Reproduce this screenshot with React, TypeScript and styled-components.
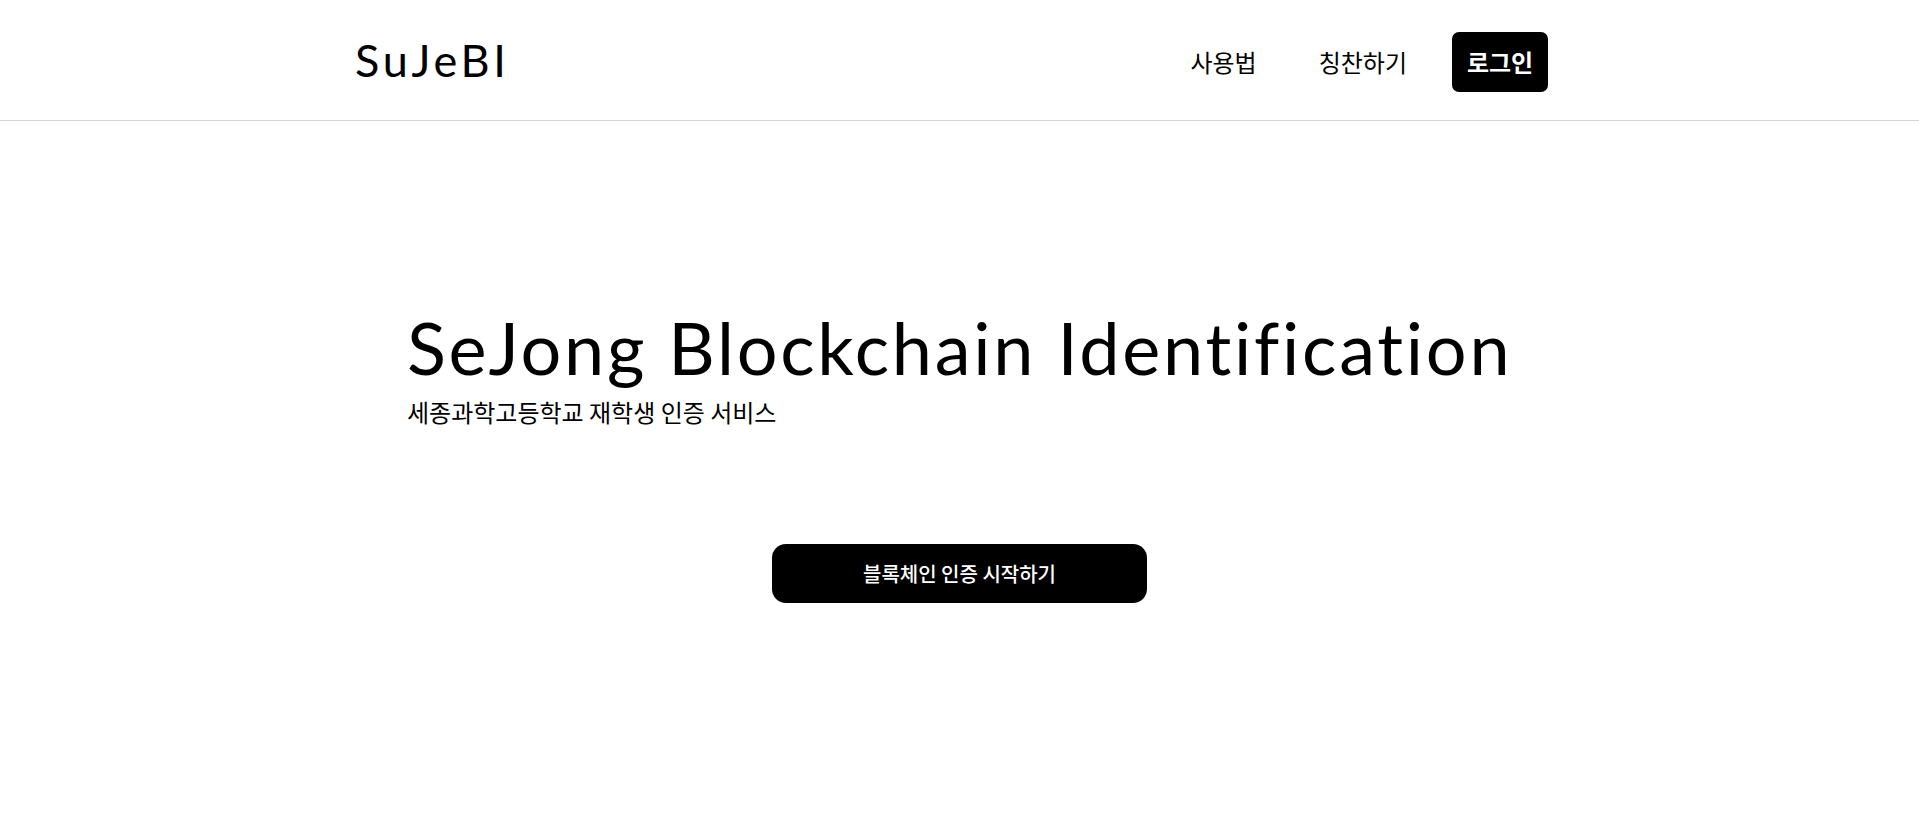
import React from "react";
import styled, { createGlobalStyle } from "styled-components";

const Global = createGlobalStyle`
  html, body { margin: 0; padding: 0; background: #fff; }
  body { font-family: "Noto Sans CJK KR", "Noto Sans", sans-serif; color: #000; }
  * { box-sizing: border-box; }
`;

const Header = styled.header`
  height: 121px;
  padding: 3px 371px 0 355px;
  border-bottom: 1px solid #d4d4d4;
  display: flex;
  align-items: center;
  justify-content: space-between;
`;

const Logo = styled.div`
  font-family: "Lato", "Noto Sans", sans-serif;
  font-size: 45px;
  font-weight: 400;
  letter-spacing: 3.8px;
  line-height: 1;
  padding-bottom: 2px;
`;

const Nav = styled.nav`
  display: flex;
  align-items: center;
`;

const NavLink = styled.a<{ $gap: number }>`
  font-family: "Noto Sans CJK KR", sans-serif;
  font-size: 24px;
  color: #000;
  text-decoration: none;
  margin-right: ${(p) => p.$gap}px;
`;

const LoginButton = styled.button`
  width: 96px;
  height: 60px;
  padding: 0;
  border: none;
  border-radius: 7px;
  background: #000;
  color: #fff;
  font-family: "Noto Sans CJK KR", sans-serif;
  font-size: 24px;
  font-weight: 700;
  cursor: pointer;
`;

const Hero = styled.main`
  display: flex;
  flex-direction: column;
  align-items: center;
  padding-top: 190px;
`;

const TitleBlock = styled.div`
  align-self: stretch;
  padding-left: 407px;
`;

const Title = styled.h1`
  margin: 0;
  font-family: "Lato", "Noto Sans", sans-serif;
  font-weight: 400;
  font-size: 72px;
  line-height: 1;
  letter-spacing: 2.75px;
  white-space: nowrap;
`;

const Subtitle = styled.p`
  margin: 13px 0 0;
  font-family: "Noto Sans CJK KR", sans-serif;
  font-size: 24px;
  line-height: 1.3;
`;

const StartButton = styled.button`
  margin-top: 117px;
  width: 375px;
  height: 59px;
  border: none;
  border-radius: 14px;
  background: #000;
  color: #fff;
  font-family: "Noto Sans CJK KR", sans-serif;
  font-size: 20px;
  font-weight: 500;
  cursor: pointer;
`;

export default function App() {
  return (
    <>
      <Global />
      <Header>
        <Logo>SuJeBI</Logo>
        <Nav>
          <NavLink href="#" $gap={62}>사용법</NavLink>
          <NavLink href="#" $gap={45}>칭찬하기</NavLink>
          <LoginButton>로그인</LoginButton>
        </Nav>
      </Header>
      <Hero>
        <TitleBlock>
          <Title>SeJong Blockchain Identification</Title>
          <Subtitle>세종과학고등학교 재학생 인증 서비스</Subtitle>
        </TitleBlock>
        <StartButton>블록체인 인증 시작하기</StartButton>
      </Hero>
    </>
  );
}
